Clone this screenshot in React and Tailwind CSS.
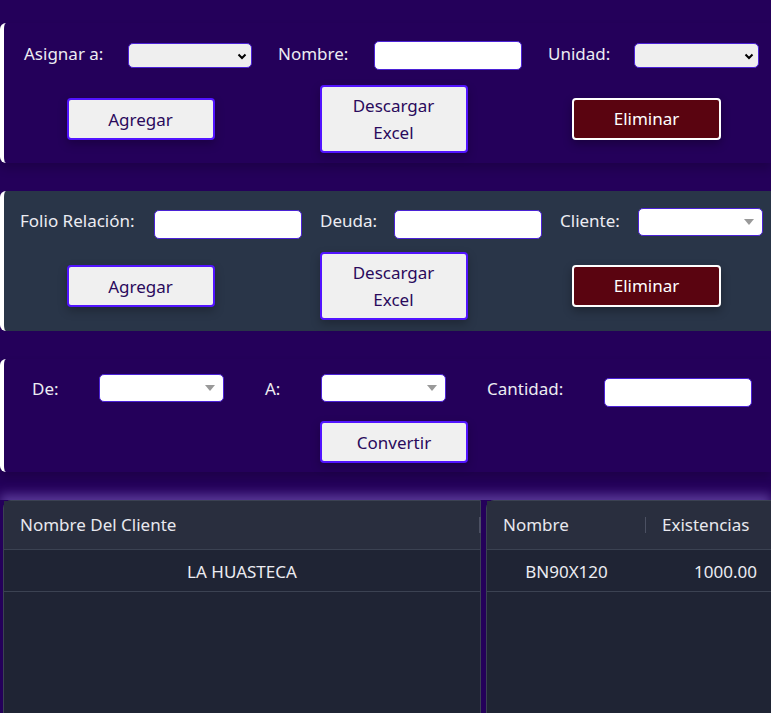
import { useState } from 'react';

const font = { fontFamily: '"Noto Sans", "Open Sans", sans-serif' };

const Chevron = () => (
  <svg width="10" height="10" viewBox="0 0 10 10" className="text-black">
    <path d="M1.5 3.5 L5 7 L8.5 3.5" fill="none" stroke="currentColor" strokeWidth="2" />
  </svg>
);

const Caret = () => (
  <svg width="10" height="6" viewBox="0 0 10 6">
    <path d="M0 0 L10 0 L5 6 Z" fill="#999" />
  </svg>
);

const NativeSelect = ({ className }) => (
  <div className={`flex h-[25px] items-center justify-end rounded-[5px] border border-[#4b22d6] bg-[#efefef] pr-[4px] ${className}`}>
    <Chevron />
  </div>
);

const DropSelect = ({ className }) => (
  <div className={`flex h-[28px] items-center justify-end rounded-[5px] border border-[#4b22d6] bg-white pr-[8px] ${className}`}>
    <Caret />
  </div>
);

const TextInput = ({ className }) => (
  <input className={`h-[29px] rounded-[5px] border border-[#4b22d6] bg-white outline-none ${className}`} />
);

const LightButton = ({ children, tall }) => (
  <button
    className={`flex w-[148px] items-center justify-center rounded-[4px] border-2 border-[#5214ff] bg-[#f0f0f0] text-[17px] leading-[27px] text-[#2a0a5c] shadow-[0_4px_10px_rgba(0,0,0,0.25)] ${tall ? 'h-[68px]' : 'h-[42px]'}`}
  >
    {children}
  </button>
);

const DangerButton = () => (
  <button className="flex h-[42px] w-[149px] items-center justify-center rounded-[4px] border-2 border-white bg-[#5a0410] text-[17px] text-white shadow-[0_4px_10px_rgba(0,0,0,0.3)]">
    Eliminar
  </button>
);

const ButtonRow = () => (
  <div className="grid grid-cols-[253px_253px_253px] items-center pl-[10px]">
    <div className="flex justify-center">
      <LightButton>Agregar</LightButton>
    </div>
    <div className="flex justify-center">
      <LightButton tall>
        <span className="flex flex-col">
          <span>Descargar</span>
          <span>Excel</span>
        </span>
      </LightButton>
    </div>
    <div className="flex justify-center">
      <DangerButton />
    </div>
  </div>
);

export default function App() {
  const [rows] = useState([{ cliente: 'LA HUASTECA' }]);

  return (
    <div className="min-h-screen overflow-hidden bg-[#24005a] pt-[23px] text-[17px] text-[#ececf2]" style={font}>
      {/* Asignar */}
      <section className="h-[140px] rounded-l-md border-l-4 border-white bg-[#24005a] pt-[18px] shadow-[0_6px_10px_rgba(0,0,0,0.18)]">
        <div className="flex h-[29px] items-center pl-[20px]">
          <span className="-mt-[3px] w-[104px]">Asignar a:</span>
          <NativeSelect className="w-[124px]" />
          <span className="-mt-[3px] ml-[26px] w-[96px]">Nombre:</span>
          <TextInput className="w-[148px]" />
          <span className="-mt-[3px] ml-[26px] w-[86px]">Unidad:</span>
          <NativeSelect className="w-[125px]" />
        </div>
        <div className="mt-[15px]">
          <ButtonRow />
        </div>
      </section>

      {/* Deudas */}
      <section className="mt-[28px] h-[140px] rounded-l-md border-l-4 border-white bg-[#293548] pt-[15px]">
        <div className="flex h-[32px] items-center pl-[16px]">
          <span className="-mt-[2px] w-[134px]">Folio Relación:</span>
          <TextInput className="mt-[4px] w-[148px]" />
          <span className="-mt-[2px] ml-[18px] w-[74px]">Deuda:</span>
          <TextInput className="mt-[4px] w-[148px]" />
          <span className="-mt-[2px] ml-[18px] w-[78px]">Cliente:</span>
          <DropSelect className="w-[125px]" />
        </div>
        <div className="mt-[14px]">
          <ButtonRow />
        </div>
      </section>

      {/* Conversion */}
      <section className="mt-[28px] h-[113px] rounded-l-md border-l-4 border-white bg-[#24005a] pt-[15px] shadow-[0_6px_10px_rgba(0,0,0,0.18)]">
        <div className="flex h-[32px] items-center pl-[28px]">
          <span className="-mt-[2px] w-[67px]">De:</span>
          <DropSelect className="-mt-[4px] w-[125px]" />
          <span className="-mt-[2px] ml-[41px] w-[56px]">A:</span>
          <DropSelect className="-mt-[4px] w-[125px]" />
          <span className="-mt-[2px] ml-[41px] w-[117px]">Cantidad:</span>
          <TextInput className="mt-[4px] w-[148px]" />
        </div>
        <div className="mt-[15px] flex pl-[316px]">
          <LightButton>Convertir</LightButton>
        </div>
      </section>

      {/* Tablas */}
      <div className="mt-[28px] flex gap-[5px] pl-[3px] shadow-[0_-6px_10px_rgba(140,110,210,0.5)]">
        <div className="h-[240px] w-[478px] shrink-0 rounded-tl-lg border border-[#3b4252] bg-[#1f2434]">
          <div className="flex h-[49px] items-center justify-between border-b border-[#3b4252] bg-[#292e3e] pl-[16px] pr-0 text-[#e8e8ee]">
            <span>Nombre Del Cliente</span>
            <span className="mr-[-1px] h-[16px] w-[2px] bg-[#4b5062]" />
          </div>
          {rows.map((r) => (
            <div key={r.cliente} className="flex h-[42px] items-center justify-center border-b border-[#3b4252] pt-[2px] text-[#ececf2]">
              {r.cliente}
            </div>
          ))}
        </div>
        <div className="h-[240px] w-[320px] shrink-0 rounded-tl-lg border border-[#3b4252] bg-[#1f2434]">
          <div className="flex h-[49px] items-center border-b border-[#3b4252] bg-[#292e3e] text-[#e8e8ee]">
            <span className="w-[158px] pl-[16px]">Nombre</span>
            <span className="h-[16px] w-[1px] bg-[#4b5062]" />
            <span className="pl-[16px]">Existencias</span>
          </div>
          <div className="flex h-[42px] items-center border-b border-[#3b4252] pt-[2px] text-[#ececf2]">
            <span className="w-[159px] text-center">BN90X120</span>
            <span className="w-[159px] text-center">1000.00</span>
          </div>
        </div>
      </div>
    </div>
  );
}
